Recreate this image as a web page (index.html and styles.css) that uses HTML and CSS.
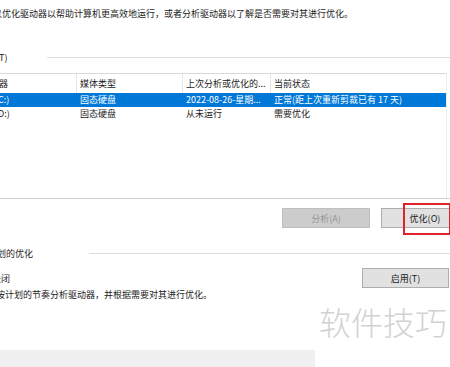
FILE: index.html
```html
<!DOCTYPE html>
<html lang="zh-CN">
<head>
<meta charset="utf-8">
<title>优化驱动器</title>
<link rel="stylesheet" href="styles.css">
</head>
<body>
<div class="page">
  <p class="intro">你可以优化驱动器以帮助计算机更高效地运行，或者分析驱动器以了解是否需要对其进行优化。</p>

  <div class="group-head status-head">
    <span class="group-label">状态(T)</span>
    <span class="group-line"></span>
  </div>

  <div class="list">
    <div class="list-row list-header">
      <div class="cell c1 hcell">驱动器</div>
      <div class="cell hcell">媒体类型</div>
      <div class="cell hcell">上次分析或优化的...</div>
      <div class="cell">当前状态</div>
    </div>
    <div class="list-row selected">
      <div class="cell c1 drive">(C:)</div>
      <div class="cell">固态硬盘</div>
      <div class="cell">2022-08-26-星期...</div>
      <div class="cell">正常(距上次重新剪裁已有 17 天)</div>
    </div>
    <div class="list-row">
      <div class="cell c1 drive">(D:)</div>
      <div class="cell">固态硬盘</div>
      <div class="cell">从未运行</div>
      <div class="cell">需要优化</div>
    </div>
  </div>

  <div class="actions">
    <button class="btn btn-disabled">分析(A)</button>
    <button class="btn btn-optimize">优化(O)<span class="highlight"></span></button>
  </div>

  <div class="group-head sched-head">
    <span class="group-label">已计划的优化</span>
    <span class="group-line"></span>
  </div>

  <div class="sched-row">
    <span class="sched-state">关闭</span>
    <button class="btn btn-enable">启用(T)</button>
  </div>
  <p class="sched-desc">驱动器按计划的节奏分析驱动器，并根据需要对其进行优化。</p>

  <div class="footer">
    <div class="footer-bar"></div>
    <div class="watermark">软件技巧</div>
  </div>
</div>
</body>
</html>
```

FILE: styles.css
```css
html, body {
  margin: 0;
  padding: 0;
  background: #ffffff;
}
body {
  width: 450px;
  height: 367px;
  overflow: hidden;
  font-family: "Noto Sans CJK SC", "Microsoft YaHei", sans-serif;
  font-size: 9px;
  color: #1a1a1a;
}
.page {
  width: 450px;
  height: 367px;
  overflow: hidden;
  display: flex;
  flex-direction: column;
}
.intro {
  margin: 0;
  margin-left: -25px;
  padding-top: 7px;
  height: 13px;
  line-height: 13px;
  white-space: nowrap;
}
.group-head {
  display: flex;
  align-items: center;
}
.status-head {
  margin-top: 31px;
  height: 13px;
  margin-left: -22px;
}
.group-label {
  white-space: nowrap;
  line-height: 13px;
}
.group-line {
  flex: 1;
  height: 1px;
  background: #dcdcdc;
  margin-left: 40px;
}
.list {
  margin-top: 9px;
  margin-left: -30px;
  width: 476px;
  border-top: 1px solid #d9d9d9;
  border-right: 1px solid #ececec;
  height: 124px;
  flex: none;
}
.list-row {
  display: grid;
  grid-template-columns: 107px 106px 88px 1fr;
  height: 14px;
  line-height: 14px;
  white-space: nowrap;
}
.list-header {
  height: 19px;
  line-height: 19px;
}
.cell {
  padding-left: 3px;
  overflow: hidden;
}
.hcell {
  border-right: 1px solid #e6e6e6;
}
.c1 {
  padding-left: 11px;
}
.c1.drive {
  padding-left: 25px;
}
.selected {
  background: #0078d7;
  color: #ffffff;
}
.actions {
  border-top: 1px solid #cfcfcf;
  display: flex;
  justify-content: flex-start;
  padding-left: 282px;
  padding-top: 9px;
  gap: 11px;
  height: 32px;
  flex: none;
}
.btn {
  font: inherit;
  width: 88px;
  height: 20px;
  padding: 0;
  border: 1px solid #adadad;
  background: #e1e1e1;
  color: #1a1a1a;
  flex: none;
  position: relative;
}
.btn-disabled {
  background: #cccccc;
  border-color: #bfbfbf;
  color: #959595;
}
.highlight {
  position: absolute;
  left: 21px;
  top: -6px;
  width: 44px;
  height: 28px;
  border: 2px solid #e0222a;
}
.sched-head {
  margin-left: -21px;
  height: 13px;
  margin-top: 7px;
}
.sched-head .group-line {
  margin-left: 56px;
}
.sched-row {
  display: flex;
  justify-content: space-between;
  align-items: center;
  margin-left: -8px;
  margin-top: 8px;
  height: 20px;
  padding-right: 1px;
}
.btn-enable {
  width: 87px;
}
.sched-desc {
  margin: 0;
  margin-left: -31px;
  line-height: 13px;
  height: 13px;
  white-space: nowrap;
}
.footer {
  flex: 1;
  display: flex;
  align-items: flex-end;
  justify-content: space-between;
  position: relative;
}
.footer-bar {
  width: 315px;
  height: 17px;
  background: #f0f0f0;
}
.watermark {
  position: absolute;
  right: 3px;
  top: 0;
  font-size: 32px;
  line-height: 40px;
  color: #d2d2d2;
  font-weight: 300;
  letter-spacing: 0;
}
```
